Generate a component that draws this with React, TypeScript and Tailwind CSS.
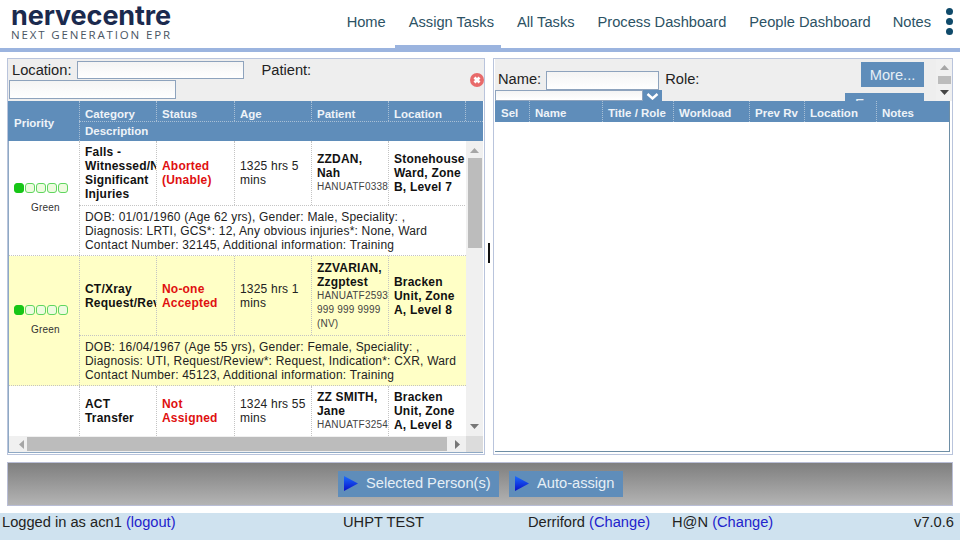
import React from "react";

const nav = ["Home", "Assign Tasks", "All Tasks", "Process Dashboard", "People Dashboard", "Notes"];

function Pri() {
  return (
    <div className="flex flex-col items-start pl-[5px] w-full">
      <div className="flex gap-[1px]">
        <div className="w-[10px] h-[10px] rounded-[3px] bg-[#17c617] border border-[#17c617]" />
        <div className="w-[10px] h-[10px] rounded-[3px] bg-[#eefbe0] border border-[#5fd65f]" />
        <div className="w-[10px] h-[10px] rounded-[3px] bg-[#eefbe0] border border-[#5fd65f]" />
        <div className="w-[10px] h-[10px] rounded-[3px] bg-[#eefbe0] border border-[#5fd65f]" />
        <div className="w-[10px] h-[10px] rounded-[3px] bg-[#eefbe0] border border-[#5fd65f]" />
      </div>
      <div className="mt-[9px] ml-[17px] text-[10px] leading-[12px] text-[#333]">Green</div>
    </div>
  );
}

type R = {
  h: string; bg: string; pri: boolean; cat: string[]; status: string[]; age: string; name: string; ids: string[]; loc: string[]; desc?: string[]; descH?: string; };

const cell = "border-l border-dotted border-[#c4c4c4] pl-[5px] overflow-hidden flex flex-col justify-center leading-[14px]";

function Row({ r }: { r: R }) {
  return (
    <div className={`grid grid-cols-[70px_77px_78px_77px_77px_77px] ${r.desc ? "border-b border-dotted border-[#c4c4c4]" : ""} ${r.bg}`}>
      <div className="row-span-2 flex items-center">{r.pri && <Pri />}</div>
      <div className={`${cell} ${r.h} font-bold text-[#111]`}>{r.cat.map((c) => <div key={c} className="whitespace-nowrap">{c}</div>)}</div>
      <div className={`${cell} ${r.h} font-bold text-[#e01010]`}>{r.status.map((c) => <div key={c} className="whitespace-nowrap">{c}</div>)}</div>
      <div className={`${cell} ${r.h} text-[#222]`}>{r.age}</div>
      <div className={`${cell} ${r.h} text-[#111]`}>
        <div className="font-bold">{r.name}</div>
        {r.ids.map((c) => <div key={c} className="whitespace-nowrap text-[10px] text-[#444]">{c}</div>)}
      </div>
      <div className={`${cell} ${r.h} font-bold text-[#111]`}>{r.loc.map((c) => <div key={c} className="whitespace-nowrap">{c}</div>)}</div>
      {r.desc && (
        <div className={`col-span-5 border-l border-t border-dotted border-[#c4c4c4] pl-[5px] ${r.descH} flex flex-col justify-center leading-[14px] text-[#222]`}>
          {r.desc.map((c) => <div key={c} className="whitespace-nowrap">{c}</div>)}
        </div>
      )}
    </div>
  );
}

const rows: R[] = [
  { h: "h-[64px]", bg: "bg-white", pri: true, cat: ["Falls -", "Witnessed/Nurse", "Significant", "Injuries"], status: ["Aborted", "(Unable)"], age: "1325 hrs 5 mins", name: "ZZDAN, Nah", ids: ["HANUATF0338"], loc: ["Stonehouse", "Ward, Zone", "B, Level 7"], descH: "h-[50px]",
    desc: ["DOB: 01/01/1960 (Age 62 yrs), Gender: Male, Speciality: ,", "Diagnosis: LRTI, GCS*: 12, Any obvious injuries*: None, Ward", "Contact Number: 32145, Additional information: Training"] },
  { h: "h-[79px]", bg: "bg-[#ffffc6]", pri: true, cat: ["CT/Xray", "Request/Review"], status: ["No-one", "Accepted"], age: "1325 hrs 1 mins", name: "ZZVARIAN, Zzgptest", ids: ["HANUATF2593", "999 999 9999", "(NV)"], loc: ["Bracken", "Unit, Zone", "A, Level 8"], descH: "h-[50px]",
    desc: ["DOB: 16/04/1967 (Age 55 yrs), Gender: Female, Speciality: ,", "Diagnosis: UTI, Request/Review*: Request, Indication*: CXR, Ward", "Contact Number: 45123, Additional information: Training"] },
  { h: "h-[50px]", bg: "bg-white", pri: false, cat: ["ACT", "Transfer"], status: ["Not", "Assigned"], age: "1324 hrs 55 mins", name: "ZZ SMITH, Jane", ids: ["HANUATF3254"], loc: ["Bracken", "Unit, Zone", "A, Level 8"] },
];

function Tri({ dir, cls }: { dir: "up" | "down" | "left" | "right"; cls: string }) {
  const p = { up: "0,7 9,7 4.5,2", down: "0,2 9,2 4.5,7", left: "6,0 6,9 1,4.5", right: "2,0 2,9 7,4.5" }[dir];
  return <svg width="9" height="9" viewBox="0 0 9 9" className={cls}><polygon points={p} /></svg>;
}

function Play() {
  return (
    <svg width="14" height="15" viewBox="0 0 14 15" className="shrink-0">
      <defs>
        <linearGradient id="pl" x1="0" y1="0" x2="0" y2="1">
          <stop offset="0" stopColor="#1a6cff" />
          <stop offset="1" stopColor="#0a10c8" />
        </linearGradient>
      </defs>
      <polygon points="0,0 14,7.5 0,15" fill="url(#pl)" />
    </svg>
  );
}

const rightCols = [
  ["Sel", "w-[34px]"], ["Name", "w-[73px]"], ["Title / Role", "w-[71px]"], ["Workload", "w-[76px]"],
  ["Prev Rv", "w-[55px]"], ["Location", "w-[72px]"], ["Notes", "w-[73px]"],
];

const topCols = [["Category", "w-[77px]"], ["Status", "w-[78px]"], ["Age", "w-[77px]"], ["Patient", "w-[77px]"], ["Location", "w-[77px]"]];

export default function App() {
  return (
    <div className="w-[960px] h-[540px] overflow-hidden bg-white flex flex-col font-['Liberation_Sans',Arial,sans-serif] text-[12px] tracking-[0.2px]">
      {/* header */}
      <div className="h-[48px] flex items-stretch shrink-0 bg-white">
        <div className="w-[172px] ml-[11px] shrink-0 flex flex-col">
          <div className="h-[27px] leading-[27px] mt-[2px] text-[27px] font-bold tracking-[-0.1px] text-[#1b2a4e] font-['Inter',sans-serif] whitespace-nowrap">nervecentre</div>
          <div className="text-[11.5px] leading-[12px] tracking-[1.85px] font-medium text-[#4a5563] font-['Open_Sans',sans-serif] whitespace-nowrap">NEXT GENERATION EPR</div>
        </div>
        <div className="ml-auto flex items-stretch gap-[2px] mr-[1px]">
          {nav.map((n) => (
            <div key={n} className={`${n === "Notes" ? "pl-[13px]" : "pl-[14px]"} pr-[7px] flex items-center pb-[2px] text-[14.67px] tracking-normal text-[#2c5264] whitespace-nowrap border-b-[3px] ${n === "Assign Tasks" ? "border-[#9bb4df]" : "border-transparent"}`}>{n}</div>
          ))}
        </div>
        <div className="w-[21px] shrink-0 flex flex-col items-center gap-[3px] pt-[8px]">
          <div className="w-[7px] h-[7px] rounded-full bg-[#0f4a6a]" />
          <div className="w-[7px] h-[7px] rounded-full bg-[#0f4a6a]" />
          <div className="w-[7px] h-[7px] rounded-full bg-[#0f4a6a]" />
        </div>
      </div>
      <div className="h-[4px] shrink-0 bg-[#9bb4df]" />

      {/* panels */}
      <div className="mt-[6px] h-[397px] px-[7px] flex shrink-0">
        {/* left */}
        <div className="w-[478px] h-full border border-[#b9c4dc] flex flex-col pb-[2px]">
          <div className="h-[42px] shrink-0 bg-[#eeeeee] relative overflow-hidden text-[14.67px] tracking-normal text-[#222] pl-[1px]">
            <div className="flex items-center h-[21px] pl-[3px] pt-[1px]">
              <span>Location:</span>
              <div className="ml-[6px] w-[167px] h-[18px] border border-[#8ea3bd] bg-gradient-to-b from-[#f4f4f4] to-white" />
              <span className="ml-[17px]">Patient:</span>
            </div>
            <div className="w-[167px] h-[19px] border border-[#8ea3bd] bg-gradient-to-b from-[#f4f4f4] to-white" />
            <svg width="14" height="14" viewBox="0 0 14 14" className="absolute right-0 top-[14px]">
              <circle cx="7" cy="7" r="7" fill="#e86a6a" />
              <path d="M4.5 4.5 L9.5 9.5 M9.5 4.5 L4.5 9.5" stroke="#fff" strokeWidth="2.8" />
            </svg>
          </div>
          <div className="w-[475px] shrink-0 h-[40px] bg-[#5f8dba] text-[#eef3f8] font-bold tracking-normal flex text-[11.5px]">
            <div className="w-[71px] flex items-center pl-[6px] pt-[5px]">Priority</div>
            <div className="flex-1 flex flex-col">
              <div className="h-[21px] flex border-b border-dotted border-[#a9c0d6]">
                {topCols.map(([t, w]) => (
                  <div key={t} className={`${w} border-l border-dotted border-[#a9c0d6] pl-[5px] pt-[7px] flex items-center`}>{t}</div>
                ))}
                <div className="flex-1 border-l border-dotted border-[#a9c0d6]" />
              </div>
              <div className="flex-1 border-l border-dotted border-[#a9c0d6] pl-[5px] pt-[1px] flex items-center">Description</div>
            </div>
          </div>
          <div className="w-[475px] h-[295px] shrink-0 flex overflow-hidden border-l border-[#8fa9c4]">
            <div className="w-[457px] shrink-0 overflow-hidden">
              {rows.map((r) => <Row key={r.name} r={r} />)}
            </div>
            <div className="flex-1 bg-[#f0f0f0] flex flex-col items-center justify-between py-[5px]">
              <div className="flex flex-col items-center w-full">
                <Tri dir="up" cls="fill-[#a6a6a6]" />
                <div className="mt-[3px] w-[14px] h-[90px] bg-[#bcbcbc]" />
              </div>
              <Tri dir="down" cls="fill-[#777]" />
            </div>
          </div>
          <div className="w-[475px] h-[16px] shrink-0 flex items-center bg-[#f0f0f0] border-l border-[#8fa9c4]">
            <Tri dir="left" cls="fill-[#a6a6a6] ml-[9px]" />
            <div className="w-[420px] h-[14px] bg-[#bcbcbc]" />
            <Tri dir="right" cls="fill-[#777] ml-[6px]" />
            <div className="ml-auto w-[17px] h-full bg-[#dcdcdc]" />
          </div>
          <div className="w-[475px] flex-1 border-t border-[#8fa9c4]" />
        </div>

        {/* splitter */}
        <div className="w-[8px] shrink-0 flex items-center justify-center pb-[1px]">
          <div className="w-[2px] h-[20px] bg-[#111] -mt-[6px]" />
        </div>

        {/* right */}
        <div className="flex-1 h-full border border-[#b9c4dc] flex flex-col pb-[2px] pl-[1px]">
          <div className="h-[42px] shrink-0 bg-[#eeeeee] flex overflow-hidden text-[14.67px] tracking-normal text-[#222]">
            <div className="w-[350px] shrink-0 flex flex-col pt-[12px]">
              <div className="flex items-center h-[19px] pl-[3px]">
                <span className="pb-[4px]">Name:</span>
                <div className="ml-[5px] w-[113px] h-[19px] border border-[#8ea3bd] bg-gradient-to-b from-[#f4f4f4] to-white" />
                <span className="ml-[6px] pb-[4px]">Role:</span>
              </div>
              <div className="flex h-[20px]">
                <div className="w-[148px] border border-[#8ea3bd] bg-gradient-to-b from-[#f4f4f4] to-white" />
                <div className="w-[19px] bg-[#5f8dba] flex justify-center pt-[3px]">
                  <svg width="13" height="7" viewBox="0 0 13 7"><path d="M1.5 1 L6.5 5.5 L11.5 1" stroke="#fff" strokeWidth="2.4" fill="none" /></svg>
                </div>
              </div>
            </div>
            <div className="w-[79px] shrink-0 flex flex-col items-end pt-[3px]">
              <div className="w-[63px] h-[25px] shrink-0 bg-[#5f8dba] text-[#e6eff6] flex items-center justify-center">More...</div>
              <div className="mt-[6px] w-[79px] h-[25px] shrink-0 bg-[#5f8dba] text-[#e6eff6] flex items-center pl-[10px] pb-[3px]">Fewer...</div>
            </div>
            <div className="ml-[12px] flex-1 bg-[#f0f0f0] flex flex-col items-center pt-[4px]">
              <Tri dir="up" cls="fill-[#a6a6a6]" />
              <div className="mt-[4px] w-[13px] h-[8px] shrink-0 bg-[#bcbcbc]" />
              <Tri dir="down" cls="fill-[#444] mt-[4px]" />
            </div>
          </div>
          <div className="w-[455px] flex-1 flex flex-col border-r border-b border-[#6e8ea5]">
            <div className="h-[21px] shrink-0 bg-[#5f8dba] flex text-[#eef3f8] font-bold tracking-normal text-[11.5px]">
              {rightCols.map(([t, w], i) => (
                <div key={t} className={`${w} flex items-center pt-[5px] ${i === 0 ? "pl-[6px]" : "pl-[5px] border-l border-dotted border-[#a9c0d6]"} whitespace-nowrap overflow-hidden`}>{t}</div>
              ))}
            </div>
            <div className="flex-1 bg-white" />
          </div>
        </div>
      </div>

      {/* action bar */}
      <div className="mx-[7px] mt-[7px] h-[44px] shrink-0 border border-[#b9bed6] bg-gradient-to-b from-[#7f7f7f] to-[#b4b4b4] flex items-center pl-[330px] gap-[10px] text-[14.67px] tracking-normal text-[#e6eff6]">
        <div className="h-[26px] w-[161px] bg-[#5f8dba] flex items-center pl-[6px] pb-[2px] gap-[8px] whitespace-nowrap"><Play />Selected Person(s)</div>
        <div className="h-[26px] w-[114px] bg-[#5f8dba] flex items-center pl-[6px] pb-[2px] gap-[8px] whitespace-nowrap"><Play />Auto-assign</div>
      </div>

      {/* footer */}
      <div className="mt-[7px] flex-1 bg-[#cfe2ef] flex items-start pl-[2px] pr-[6px] text-[14.67px] leading-[18px] tracking-normal text-[#222]">
        <div className="w-[341px]">Logged in as acn1 <span className="text-[#2222cc]">(logout)</span></div>
        <div className="w-[185px]">UHPT TEST</div>
        <div className="w-[144px]">Derriford <span className="text-[#2222cc]">(Change)</span></div>
        <div>H@N <span className="text-[#2222cc]">(Change)</span></div>
        <div className="ml-auto">v7.0.6</div>
      </div>
    </div>
  );
}
